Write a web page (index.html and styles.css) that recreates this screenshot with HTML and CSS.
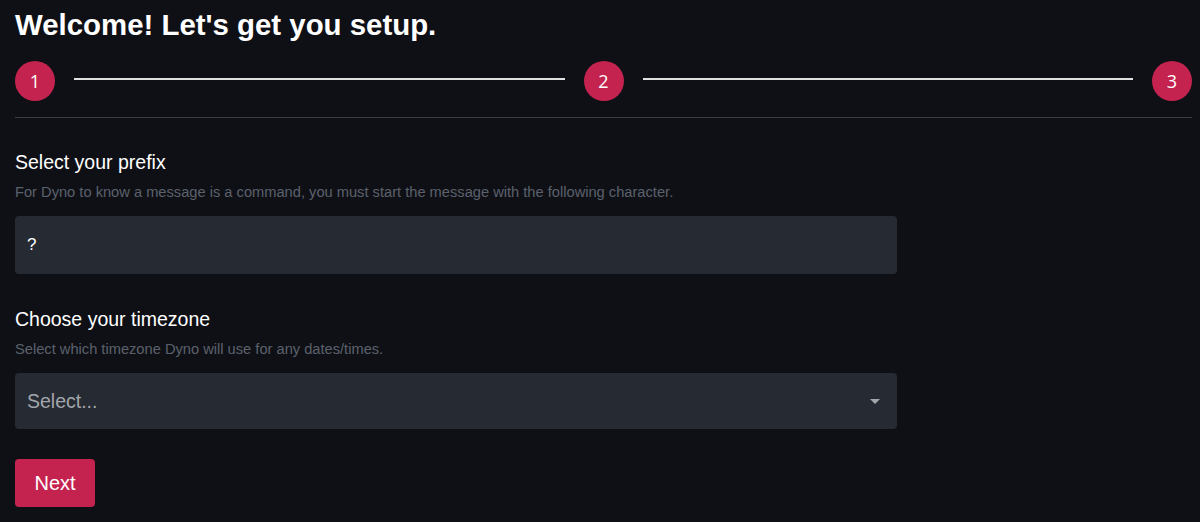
FILE: index.html
```html
<!DOCTYPE html>
<html lang="en">
<head>
  <meta charset="UTF-8">
  <meta name="viewport" content="width=device-width, initial-scale=1.0">
  <title>Setup</title>
  <link rel="stylesheet" href="styles.css">
</head>
<body>
  <div id="wizard">
    <h1>Welcome! Let's get you setup.</h1>

    <div class="steps">
      <div class="step">1</div>
      <div class="step-line"></div>
      <div class="step">2</div>
      <div class="step-line"></div>
      <div class="step">3</div>
    </div>

    <div class="form">
      <div class="field">
        <h3>Select your prefix</h3>
        <p class="help">For Dyno to know a message is a command, you must start the message with the following character.</p>
        <input type="text" class="text-input" value="?">
      </div>

      <div class="field">
        <h3>Choose your timezone</h3>
        <p class="help">Select which timezone Dyno will use for any dates/times.</p>
        <div class="select">
          <span class="placeholder">Select...</span>
          <span class="arrow"></span>
        </div>
      </div>

      <button class="next">Next</button>
    </div>
  </div>
</body>
</html>
```

FILE: styles.css
```css
body {
  font-family: "Liberation Sans", Arial, sans-serif;
  background-color: #0f1016;
  color: #fff;
  margin: 0;
  padding: 0;
}

#wizard {
  padding: 7px 8px 0 15px;
}

h1 {
  font-size: 29.4px;
  font-weight: bold;
  margin: 0;
  line-height: 36px;
}

.steps {
  display: flex;
  align-items: center;
  margin-top: 18px;
  padding-bottom: 16px;
  border-bottom: 1px solid #3a3c42;
}

.step {
  width: 40px;
  height: 40px;
  border-radius: 50%;
  background-color: #c4234f;
  color: #fff;
  font-family: "Open Sans", sans-serif;
  font-size: 18px;
  display: flex;
  align-items: center;
  justify-content: center;
  flex-shrink: 0;
}

.step-line {
  flex: 1;
  height: 2px;
  background-color: #e0e0e0;
  margin: 0 19px 4px 19px;
}

.form {
  width: 882px;
  padding-top: 32px;
}

.field {
  margin-bottom: 30px;
}

.field + .field {
  margin-top: 33px;
}

.field h3 {
  font-size: 19.5px;
  font-weight: normal;
  margin: 0;
  line-height: 24px;
}

.help {
  font-size: 14.67px;
  color: #5b616c;
  margin: 10px 0 15px;
  line-height: 17px;
}

.text-input {
  display: block;
  box-sizing: border-box;
  width: 100%;
  height: 58px;
  background-color: #262a33;
  border: none;
  border-radius: 4px;
  padding: 0 12px;
  color: #fff;
  font-family: "Liberation Sans", Arial, sans-serif;
  font-size: 17px;
  outline: none;
}

.select {
  box-sizing: border-box;
  height: 56px;
  background-color: #262a33;
  border-radius: 4px;
  padding: 0 17px 0 12px;
  display: flex;
  align-items: center;
  justify-content: space-between;
}

.placeholder {
  font-size: 19.5px;
  color: #a3a6ab;
}

.arrow {
  width: 0;
  height: 0;
  border-left: 5px solid transparent;
  border-right: 5px solid transparent;
  border-top: 5px solid #a3a6ab;
}

.next {
  background-color: #c4234f;
  color: #fff;
  border: none;
  border-radius: 4px;
  width: 80px;
  height: 48px;
  font-family: "Liberation Sans", Arial, sans-serif;
  font-size: 20px;
  cursor: pointer;
}
```
